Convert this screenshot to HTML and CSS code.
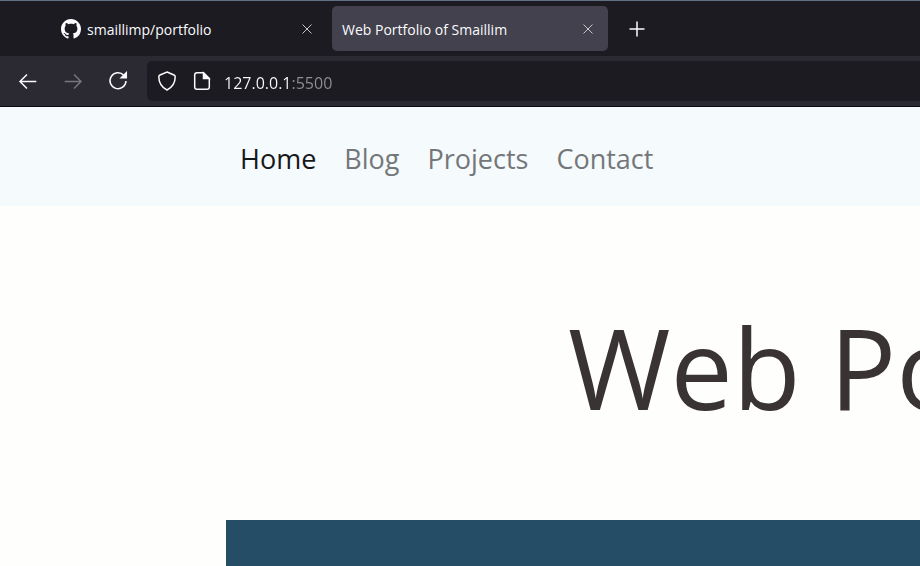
FILE: index.html
```html
<!DOCTYPE html>
<html lang="en">
<head>
<meta charset="utf-8">
<title>Web Portfolio of Smaillim</title>
<link rel="stylesheet" href="styles.css">
</head>
<body>
<header class="browser">
  <div class="tabs">
    <div class="tab">
      <svg class="favicon" viewBox="0 0 16 16" aria-hidden="true"><path fill="currentColor" d="M8 0C3.58 0 0 3.58 0 8c0 3.54 2.29 6.53 5.47 7.59.4.07.55-.17.55-.38 0-.19-.01-.82-.01-1.49-2.01.37-2.53-.49-2.69-.94-.09-.23-.48-.94-.82-1.13-.28-.15-.68-.52-.01-.53.63-.01 1.08.58 1.23.82.72 1.21 1.87.87 2.33.66.07-.52.28-.87.51-1.07-1.78-.2-3.64-.89-3.64-3.95 0-.87.31-1.59.82-2.15-.08-.2-.36-1.02.08-2.12 0 0 .67-.21 2.2.82.64-.18 1.32-.27 2-.27s1.36.09 2 .27c1.53-1.04 2.2-.82 2.2-.82.44 1.1.16 1.92.08 2.12.51.56.82 1.27.82 2.15 0 3.07-1.87 3.75-3.65 3.95.29.25.54.73.54 1.48 0 1.07-.01 1.93-.01 2.2 0 .21.15.46.55.38A8.01 8.01 0 0 0 16 8c0-4.42-3.58-8-8-8z"/></svg>
      <span class="tab-title">smaillimp/portfolio</span>
      <button class="close" aria-label="Close smaillimp/portfolio"><svg viewBox="0 0 10 10"><path d="M.5.5l9 9M9.500.5l-9 9"/></svg></button>
    </div>
    <div class="tab tab-active">
      <span class="tab-title">Web Portfolio of Smaillim</span>
      <button class="close" aria-label="Close Web Portfolio of Smaillim"><svg viewBox="0 0 10 10"><path d="M.5.5l9 9M9.500.5l-9 9"/></svg></button>
    </div>
    <button class="new-tab" aria-label="New tab"><svg viewBox="0 0 16 16"><path d="M8 .5v15M.5 8h15"/></svg></button>
  </div>
  <div class="toolbar">
    <button class="tool" aria-label="Back"><svg viewBox="0 0 20 20"><path d="M18.300 10.500H2M9 3.500l-7 7 7 7"/></svg></button>
    <button class="tool" aria-label="Forward" disabled><svg viewBox="0 0 20 20"><path d="M1.700 10.500H18M11 3.500l7 7-7 7"/></svg></button>
    <button class="tool" aria-label="Reload"><svg viewBox="0 0 20 20"><path d="M15.800 4.200A8 8 0 1 0 18 10"/><path class="solid" d="M18.300 1.700v5h-5z"/></svg></button>
    <div class="address">
      <svg viewBox="0 0 20 20" aria-hidden="true"><path d="M10 1l7 3q1.200.5 1.200 1.800C18.200 12.500 15 16.500 10 19 5 16.500 1.800 12.500 1.800 5.800Q1.800 4.500 3 4z"/></svg>
      <svg viewBox="0 0 20 20" aria-hidden="true"><path d="M5 1.700h6.500L17.300 7.500V16q0 2.300-2.300 2.300H5Q2.700 18.300 2.700 16V4Q2.700 1.700 5 1.700z"/><path class="solid" d="M11.500 2v5.500H17z"/></svg>
      <input class="url" type="text" value="127.0.0.1:5500" aria-label="Address">
    </div>
  </div>
</header>
<nav class="site-nav">
  <a class="current" href="#home">Home</a>
  <a href="#blog">Blog</a>
  <a href="#projects">Projects</a>
  <a href="#contact">Contact</a>
</nav>
<main class="page">
  <h1>Web Portfolio</h1>
  <section class="banner"></section>
</main>
</body>
</html>
```
FILE: styles.css
```css
* { box-sizing: border-box; }

body {
  margin: 0;
  min-height: 100vh;
  display: flex;
  flex-direction: column;
  background: #fefefd;
  font-family: "Segoe UI", "Open Sans", "Noto Sans", sans-serif;
}

button {
  display: flex;
  align-items: center;
  justify-content: center;
  padding: 0;
  border: 0;
  background: none;
  color: inherit;
}

svg {
  flex: none;
  fill: none;
  stroke: currentColor;
}

.browser {
  border-top: 1px solid #5f7183;
  border-bottom: 1px solid #0c0c0d;
  background: #1c1b22;
  color: #fbfbfe;
}

.tabs {
  display: flex;
  gap: 5px;
  padding: 5px 0 5px 51px;
}

.tab {
  display: flex;
  align-items: center;
  width: 276px;
  height: 45px;
  padding: 0 10px;
  border-radius: 5px;
  font-size: 14px;
}

.tab-active {
  background: #42414d;
}

.favicon {
  width: 20px;
  height: 20px;
  margin-right: 6px;
  stroke: none;
}

.tab-title {
  flex: 1;
  padding-top: 2px;
  white-space: nowrap;
}

.close {
  width: 20px;
  height: 20px;
  color: #c5c5ca;
}

.close svg {
  width: 10px;
  height: 10px;
}

.new-tab {
  width: 47px;
  height: 45px;
}

.new-tab svg {
  width: 16px;
  height: 16px;
  stroke-width: 1.5;
}

.toolbar {
  display: flex;
  align-items: center;
  padding: 5px 0 5px 5px;
  background: #2b2a33;
}

.tool {
  width: 45px;
  height: 40px;
}

.tool svg,
.address svg {
  width: 20px;
  height: 20px;
  stroke-width: 1.5;
}

.tool:disabled { color: #77767d; }

.solid { fill: currentColor; }

.address {
  flex: 1;
  display: flex;
  align-items: center;
  gap: 15px;
  height: 40px;
  margin-left: 7px;
  padding-left: 10px;
  border-radius: 5px 0 0 5px;
  background: #1c1b22;
}

.url {
  flex: 1;
  min-width: 0;
  height: 32px;
  margin-left: -3px;
  padding: 3px 0 0;
  border: 0;
  outline: 0;
  background: linear-gradient(to right, #fbfbfe 67px, #8f8f96 67px) text;
  -webkit-background-clip: text;
  color: transparent;
  font: 16px "Segoe UI", "Open Sans", "Noto Sans", sans-serif;
}

.site-nav {
  display: flex;
  align-items: center;
  gap: 28px;
  height: 99px;
  padding: 3px 0 0 240px;
  background: #f5fafd;
  font-size: 27px;
}

.site-nav a {
  color: #747779;
  text-decoration: none;
}

.site-nav .current { color: #17181a; }

.page {
  flex: 1;
  display: flex;
  flex-direction: column;
  padding-left: 226px;
}

h1 {
  margin: 0;
  padding: 85px 0 77px 342px;
  overflow: hidden;
  color: #3a3333;
  font-size: 111px;
  font-weight: 400;
  line-height: 152px;
  white-space: nowrap;
}

.banner {
  flex: 1;
  background: #254e66;
}
```
